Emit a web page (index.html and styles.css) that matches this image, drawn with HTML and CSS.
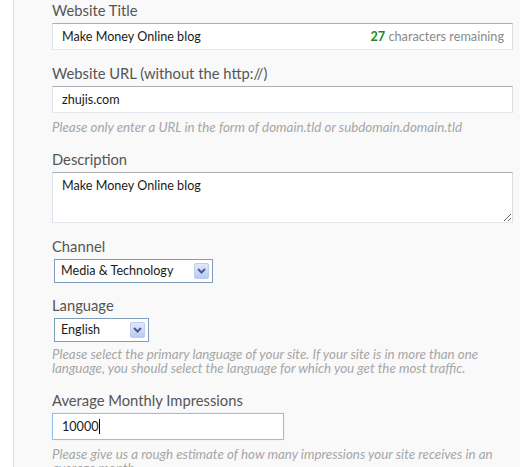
FILE: index.html
```html
<!DOCTYPE html>
<html>
<head>
<meta charset="utf-8">
<link rel="stylesheet" href="styles.css">
</head>
<body>
<div class="page">
  <form class="form">
    <div class="field">
      <label class="label">Website Title</label>
      <div class="box-wrap">
        <input class="text" type="text" value="Make Money Online blog">
        <span class="counter"><b>27</b> characters remaining</span>
      </div>
    </div>
    <div class="field field-url">
      <label class="label">Website URL (without the http://)</label>
      <input class="text" type="text" value="zhujis.com">
      <p class="hint">Please only enter a URL in the form of domain.tld or subdomain.domain.tld</p>
    </div>
    <div class="field">
      <label class="label">Description</label>
      <textarea class="text area">Make Money Online blog</textarea>
    </div>
    <div class="field field-short">
      <label class="label">Channel</label>
      <div class="select select-channel">
        <span class="select-value">Media &amp; Technology</span>
        <span class="select-btn"><svg width="9" height="6" viewBox="0 0 9 6"><path d="M1 1 L4.5 4.5 L8 1" fill="none" stroke="#4a5f86" stroke-width="2"/></svg></span>
      </div>
    </div>
    <div class="field field-wide">
      <label class="label">Language</label>
      <div class="select select-lang">
        <span class="select-value">English</span>
        <span class="select-btn"><svg width="9" height="6" viewBox="0 0 9 6"><path d="M1 1 L4.5 4.5 L8 1" fill="none" stroke="#4a5f86" stroke-width="2"/></svg></span>
      </div>
      <p class="hint hint-close">Please select the primary language of your site. If your site is in more than one language, you should select the language for which you get the most traffic.</p>
    </div>
    <div class="field">
      <label class="label">Average Monthly Impressions</label>
      <div class="text focus">10000<span class="caret"></span></div>
      <p class="hint">Please give us a rough estimate of how many impressions your site receives in an average month.</p>
    </div>
  </form>
</div>
</body>
</html>
```
FILE: styles.css
```css
html, body {
  margin: 0;
  padding: 0;
  background: #ffffff;
}
body {
  font-family: "Lato", "Open Sans", sans-serif;
  height: 467px;
  overflow: hidden;
}
.page {
  margin-left: 13px;
  border-left: 1px solid #e2e2e2;
  background: #f9f9f9;
  min-height: 467px;
  padding: 1px 0 0 38px;
}
.form {
  width: 461px;
}
.field {
  margin-bottom: 14px;
}
.field-url {
  margin-bottom: 16px;
}
.field-short {
  margin-bottom: 13px;
}
.field-wide {
  margin-bottom: 16px;
}
.label {
  display: block;
  font-size: 14.75px;
  line-height: 18px;
  color: #555555;
  margin-bottom: 4px;
}
.box-wrap {
  position: relative;
}
.text {
  display: block;
  box-sizing: border-box;
  width: 461px;
  height: 27px;
  margin: 0;
  padding: 0 9px;
  border: 1px solid #dbdfe6;
  border-top-color: #abadb3;
  border-bottom-color: #e3e9ef;
  background: #ffffff;
  font-family: "Lato", "Open Sans", sans-serif;
  font-size: 12.6px;
  color: #1a1a1a;
  outline: none;
}
.counter {
  position: absolute;
  right: 9px;
  top: 5px;
  font-size: 12.7px;
  line-height: 16px;
  color: #8a8a8a;
}
.counter b {
  color: #1f8a1f;
  font-weight: 700;
}
.area {
  height: 51px;
  padding: 5px 9px;
  line-height: 16px;
  resize: vertical;
}
.hint {
  margin: 7px 0 0 0;
  font-size: 13.35px;
  line-height: 14px;
  font-style: italic;
  color: #a6a6a6;
}
.hint-close {
  margin-top: 5px;
}
.select {
  position: relative;
  box-sizing: border-box;
  height: 24px;
  margin-left: 2px;
  border: 1px solid #7f9db9;
  background: #ffffff;
  font-size: 12.6px;
  color: #1a1a1a;
  line-height: 22px;
  padding-left: 6px;
}
.select-channel {
  width: 159px;
}
.select-lang {
  width: 95px;
}
.select-btn {
  position: absolute;
  right: 3px;
  top: 3px;
  width: 15px;
  height: 16px;
  box-sizing: border-box;
  border: 1px solid #bccbef;
  border-radius: 2px;
  background: linear-gradient(#e0e8fd, #b9cbf6);
  display: flex;
  align-items: center;
  justify-content: center;
}
.focus {
  width: 232px;
  border: 1px solid #8ec0ea;
  box-shadow: 0 0 1px #b8d9f5;
  line-height: 25px;
}
.caret {
  display: inline-block;
  width: 1px;
  height: 15px;
  background: #000000;
  vertical-align: -3px;
}
```
